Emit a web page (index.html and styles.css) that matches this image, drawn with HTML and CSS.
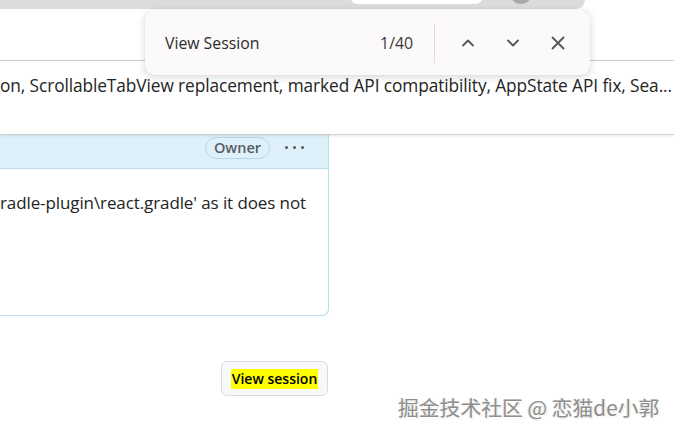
FILE: index.html
```html
<!DOCTYPE html>
<html lang="en">
<head>
<meta charset="utf-8">
<title>View Session</title>
<link rel="stylesheet" href="styles.css">
</head>
<body>
<div class="page">
  <header class="topbar">
    <div class="chrome">
      <div class="chrome-field"></div>
      <div class="chrome-avatar"></div>
    </div>
  </header>
  <div class="title-row">
    <span class="title-text">on, ScrollableTabView replacement, marked API compatibility, AppState API fix, Sea...</span>
  </div>
  <section class="card">
    <div class="card-head">
      <span class="pill">Owner</span>
      <span class="dots"><i></i><i></i><i></i></span>
    </div>
    <div class="card-body">
      <span class="body-text">gradle-plugin\react.gradle' as it does not</span>
    </div>
  </section>
  <div class="actions">
    <button class="view-btn"><mark>View session</mark></button>
  </div>

  <div class="findbar">
    <span class="find-query">View Session</span>
    <span class="find-count">1/40</span>
    <span class="find-divider"></span>
    <span class="find-icon">
      <svg width="16" height="16" viewBox="0 0 16 16"><path d="M3 10.5 L8 5.5 L13 10.5" fill="none" stroke="#555" stroke-width="1.8" stroke-linecap="round" stroke-linejoin="round"/></svg>
    </span>
    <span class="find-icon">
      <svg width="16" height="16" viewBox="0 0 16 16"><path d="M3 5.5 L8 10.5 L13 5.5" fill="none" stroke="#555" stroke-width="1.8" stroke-linecap="round" stroke-linejoin="round"/></svg>
    </span>
    <span class="find-icon">
      <svg width="16" height="16" viewBox="0 0 16 16"><path d="M2.5 2.5 L13.5 13.5 M13.5 2.5 L2.5 13.5" fill="none" stroke="#555" stroke-width="1.8" stroke-linecap="round"/></svg>
    </span>
  </div>

  <div class="watermark">掘金技术社区 @ 恋猫de小郭</div>
</div>
</body>
</html>
```

FILE: styles.css
```css
* { box-sizing: border-box; }
html, body { margin: 0; padding: 0; background: #ffffff; }
body {
  font-family: "Open Sans", "Noto Sans", "Noto Sans CJK SC", sans-serif;
  color: #242424;
  width: 674px;
  height: 435px;
  overflow: hidden;
}
.page { position: relative; width: 674px; height: 435px; overflow: hidden; }

.topbar {
  height: 61px;
  border-bottom: 1px solid #d3d3d3;
}
.chrome {
  width: 585px;
  height: 9px;
  background: #dcdcdc;
  border-bottom-right-radius: 10px;
  display: flex;
  align-items: flex-end;
}
.chrome-field {
  margin-left: 350px;
  width: 133px;
  height: 14px;
  margin-bottom: 5px;
  background: #ffffff;
  border-radius: 0 0 8px 8px;
  align-self: flex-start;
  margin-top: -10px;
}
.chrome-avatar {
  margin-left: 27px;
  width: 22px;
  height: 22px;
  border-radius: 50%;
  background: #a9a9a9;
  align-self: flex-start;
  margin-top: -18px;
}

.title-row {
  height: 74px;
  padding-top: 14px;
  border-bottom: 1px solid #d0d0d0;
  box-shadow: 0 1px 3px rgba(0,0,0,0.10);
  white-space: nowrap;
  overflow: hidden;
  position: relative;
  z-index: 1;
}
.title-text {
  font-size: 17.3px;
  line-height: 22px;
  color: #242424;
  letter-spacing: -0.09px;
}

.card {
  width: 331px;
  margin-left: -2px;
  border: 1px solid #b9dcf0;
  border-top: none;
  border-radius: 0 0 7px 0;
  overflow: hidden;
}
.card-head {
  height: 34px;
  background: #def1fb;
  border-bottom: 1px solid #b9dcf0;
  display: flex;
  align-items: flex-start;
  justify-content: flex-end;
  padding-top: 2px;
  padding-right: 24px;
  gap: 15px;
}
.pill {
  height: 22px;
  padding: 0 8px;
  border: 1px solid #b7d6ea;
  border-radius: 11px;
  font-size: 14.5px;
  line-height: 20px;
  color: #555c63;
  font-weight: 600;
}
.dots {
  display: flex;
  gap: 5px;
  padding-top: 9px;
}
.dots i {
  width: 3px;
  height: 3px;
  border-radius: 50%;
  background: #5a5a5a;
  display: block;
}
.card-body {
  height: 146px;
  padding-top: 23px;
  padding-right: 22px;
  display: flex;
  justify-content: flex-end;
  white-space: nowrap;
}
.body-text {
  font-size: 17px;
  line-height: 22px;
  color: #242424;
  letter-spacing: -0.1px;
}

.actions {
  width: 328px;
  margin-top: 45px;
  display: flex;
  justify-content: flex-end;
}
.view-btn {
  width: 107px;
  height: 35px;
  border: 1px solid #d9dde1;
  border-radius: 6px;
  background: #f7f8fa;
  font-family: "Open Sans", "Noto Sans", sans-serif;
  font-size: 14px;
  font-weight: 600;
  padding: 0;
  display: flex;
  align-items: center;
  justify-content: center;
}
.view-btn mark {
  background: #ffff00;
  color: #000;
  line-height: 20px;
  padding: 0 1px;
}

.findbar {
  position: absolute;
  left: 145px;
  top: 10px;
  width: 445px;
  height: 65px;
  background: #fcf9fb;
  border-radius: 9px;
  box-shadow: 0 2px 8px rgba(0,0,0,0.16), 0 0 1px rgba(0,0,0,0.12);
  display: flex;
  align-items: center;
  padding-left: 20px;
  padding-right: 24px;
  z-index: 5;
}
.find-query {
  font-size: 15.8px;
  color: #2b2b2b;
  flex: 1;
}
.find-count {
  font-size: 15.8px;
  color: #3a3a3a;
  margin-right: 21px;
}
.find-divider {
  width: 1px;
  height: 40px;
  background: #f0d4dc;
  margin-right: 25px;
}
.find-icon {
  width: 16px;
  height: 16px;
  display: flex;
  margin-right: 29px;
}
.find-icon:last-child { margin-right: 0; }

.watermark {
  position: absolute;
  left: 398px;
  top: 394px;
  font-family: "Noto Sans CJK SC", "Noto Sans", sans-serif;
  font-size: 20.8px;
  line-height: 26px;
  color: #8e8e8e;
  text-shadow: 1px 1px 0 #ffffff, -1px 0 0 #e6e6e6, 1px 1px 1px rgba(0,0,0,0.25);
  white-space: nowrap;
}
```
